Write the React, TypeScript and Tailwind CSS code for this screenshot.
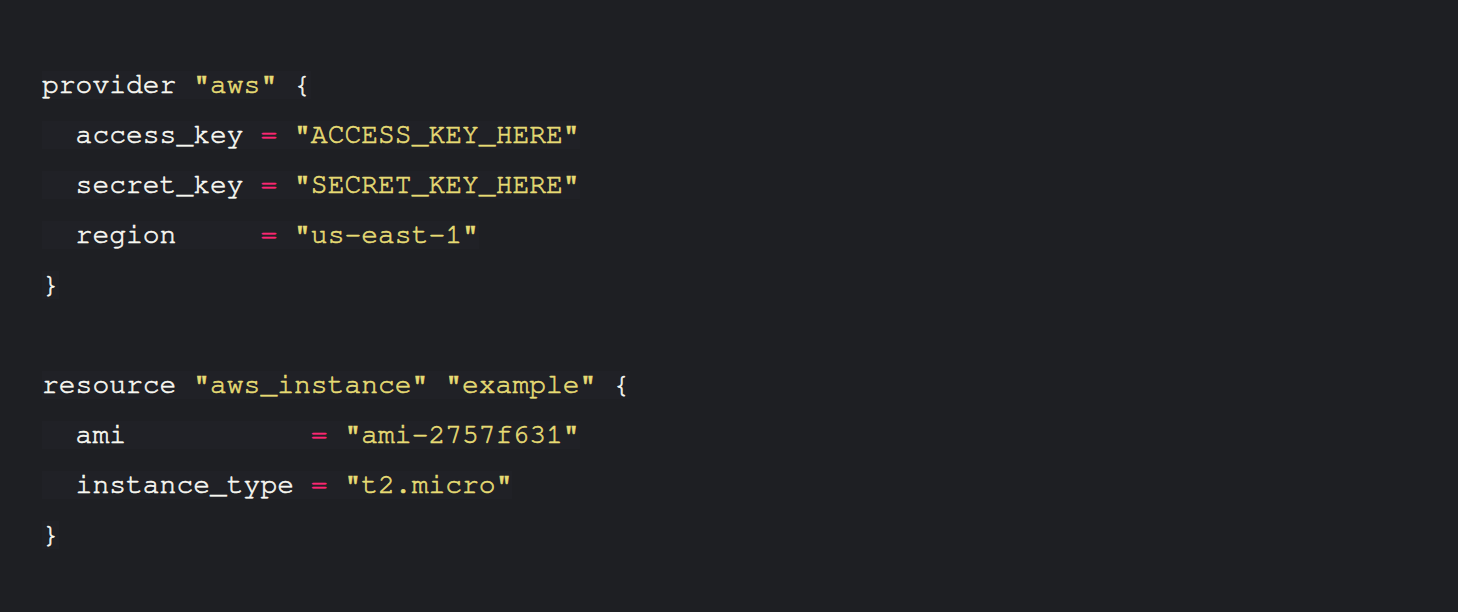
type Tok = { t: string; c?: "s" | "o" };

const lines: Tok[][] = [
  [{ t: "provider " }, { t: '"aws"', c: "s" }, { t: " {" }],
  [{ t: "  access_key " }, { t: "=", c: "o" }, { t: " " }, { t: '"ACCESS_KEY_HERE"', c: "s" }],
  [{ t: "  secret_key " }, { t: "=", c: "o" }, { t: " " }, { t: '"SECRET_KEY_HERE"', c: "s" }],
  [{ t: "  region     " }, { t: "=", c: "o" }, { t: " " }, { t: '"us-east-1"', c: "s" }],
  [{ t: "}" }],
  [],
  [
    { t: "resource " },
    { t: '"aws_instance"', c: "s" },
    { t: " " },
    { t: '"example"', c: "s" },
    { t: " {" },
  ],
  [{ t: "  ami           " }, { t: "=", c: "o" }, { t: " " }, { t: '"ami-2757f631"', c: "s" }],
  [{ t: "  instance_type " }, { t: "=", c: "o" }, { t: " " }, { t: '"t2.micro"', c: "s" }],
  [{ t: "}" }],
];

export default function App() {
  return (
    <div className="w-[1458px] h-[612px] bg-[#1e1f23] pt-[60px] pl-[42px] overflow-hidden">
      <pre className="font-['Nimbus_Mono_PS','FreeMono','Courier','Liberation_Mono',monospace] text-[28px] leading-[50px] text-[#f8f8f2] [-webkit-text-stroke:0.6px_currentColor] m-0">
        {lines.map((line, i) => (
          <div key={i} className="h-[50px]">
            {line.length > 0 ? (
              <span className="bg-[#202126]">
                {line.map((tok, j) => (
                  <span
                    key={j}
                    className={
                      tok.c === "s"
                        ? "text-[#e6db74]"
                        : tok.c === "o"
                        ? "text-[#f92672]"
                        : ""
                    }
                  >
                    {tok.t}
                  </span>
                ))}
              </span>
            ) : null}
          </div>
        ))}
      </pre>
    </div>
  );
}
